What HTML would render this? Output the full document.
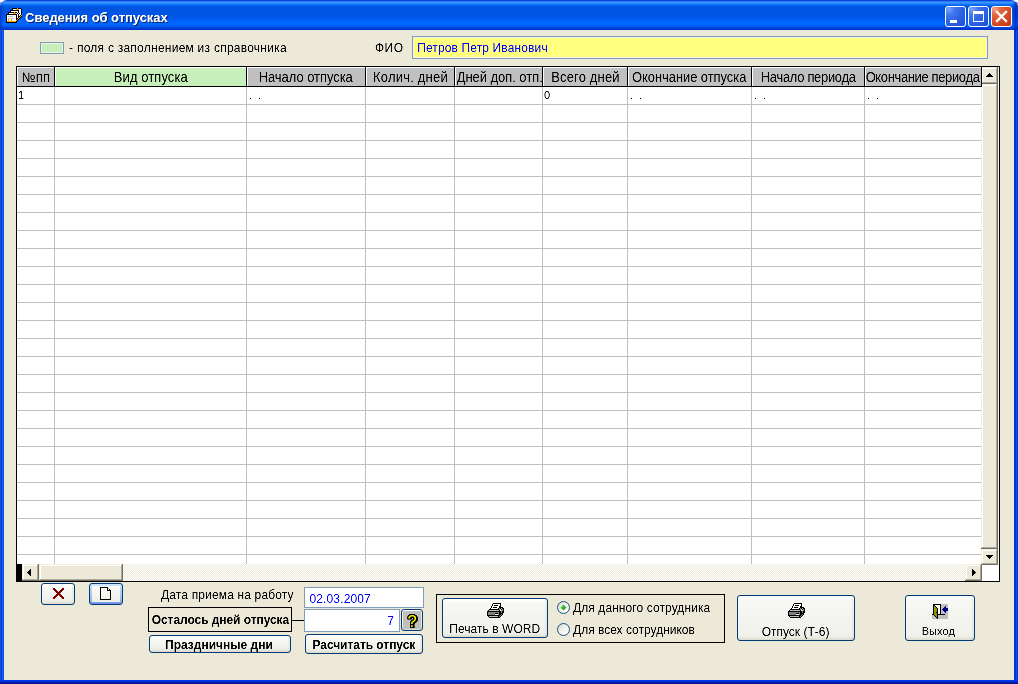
<!DOCTYPE html><html lang="ru"><head><meta charset="utf-8"><title>Сведения об отпусках</title><style>
*{box-sizing:border-box;margin:0;padding:0}
html,body{width:1018px;height:684px;overflow:hidden;background:#ECE9D8}
body{position:relative;font-family:"Liberation Sans",sans-serif;font-size:12px;color:#000;line-height:1}
.abs{position:absolute}
#win{position:absolute;left:0;top:0;width:1018px;height:684px;background:#0855DD;overflow:hidden}
#bl{position:absolute;left:0;top:8px;width:4px;height:676px;background:linear-gradient(to right,#0A5ADB 0 1px,#0831D9 1px 2px,#166AEE 2px 3px,#0855DD 3px 4px)}
#br{position:absolute;left:1014px;top:8px;width:4px;height:676px;background:linear-gradient(to right,#0038F0 0 1px,#0030D2 1px 2px,#0A50F0 2px 3px,#0035D8 3px 4px)}
#bb{position:absolute;left:0;top:680px;width:1018px;height:4px;background:linear-gradient(to bottom,#0038F0 0 1px,#002AD5 1px 2px,#001DA5 2px 3px,#00138C 3px 4px)}
#client{position:absolute;left:4px;top:30px;width:1010px;height:650px;background:#ECE9D8}
#tb{position:absolute;left:0;top:0;width:1018px;height:30px;border-radius:7px 7px 0 0;
 background:linear-gradient(to bottom,#0A44D8 0px,#0A44D8 1px,#2A7AF4 1.5px,#3E95FF 2.5px,#2A88FF 3.5px,#0F74F8 4.5px,#0463EC 5.5px,#0057E2 7px,#0054E0 9px,#0055E6 16px,#005AF0 19px,#0066FF 22px,#0066FF 25px,#0060F2 26px,#0052E0 27px,#0040D4 28px,#0030CC 30px)}
#tb:before{content:'';position:absolute;left:0;top:2px;width:4px;height:28px;background:linear-gradient(to right,rgba(0,30,170,0.55),rgba(0,30,170,0.2) 50%,rgba(0,30,170,0))}
#tb:after{content:'';position:absolute;right:0;top:2px;width:6px;height:28px;background:linear-gradient(to left,rgba(0,25,160,0.3),rgba(0,25,170,0.6) 40%,rgba(0,30,170,0))}
#corner{position:absolute;left:0;top:0;width:1018px;height:10px;background:#fff}
#title{color:#fff;font-weight:bold;font-size:13px;white-space:nowrap;text-shadow:1px 1px 0 #0a246a}
.cb{position:absolute;top:6px;width:21px;height:21px;border:1px solid #fff;border-radius:3px;
 background:radial-gradient(circle at 15% 12%,#7AA4FA 0%,#4077EE 25%,#2B60E6 60%,#1E4CD0 100%)}
.cb.x{background:radial-gradient(circle at 15% 12%,#F0A58C 0%,#E36A44 22%,#DA4E27 55%,#C53610 100%)}
.t{position:absolute;white-space:nowrap;filter:url(#crisp)}
.hc span{filter:url(#crisp);display:inline-block}
.fld{position:absolute;border:1px solid #7F9DB9;background:#fff}
.btn{position:absolute;border:1px solid #003C74;border-radius:3px;
 background:linear-gradient(to right,rgba(0,0,0,0) calc(100% - 3px),rgba(120,110,80,0.10) 100%),linear-gradient(to bottom,#fff 0,#fff 1px,#F8F8F5 4px,#F4F4F0 45%,#F1F1EC calc(100% - 4px),#E8E6DE calc(100% - 2px),#DCD8CE 100%)}
.btn.def{padding:2px;background:linear-gradient(to bottom,#fff 0,#F8F8F5 3px,#F4F4F0 45%,#F0F0EA 100%) content-box,linear-gradient(to bottom,#CEE7FF 0%,#BCD4F6 25%,#A4C0EC 70%,#89ADE4 88%,#6982EE 100%) padding-box}
.q{position:absolute;left:2px;top:0.5px;width:16px;height:20px;font-size:16.5px;line-height:20px;text-align:center;color:#FFFF00;filter:url(#crisp);text-shadow:1px 0 #000,-1px 0 #000,0 1px #000,0 -1px #000,1px 1px #000,-1px 1px #000,1px -1px #000,-1px -1px #000,2px 0 #000,2px 1px #000}
#grid{position:absolute;left:16px;top:66px;width:984px;height:516px;background:#000}
#ginner{position:absolute;left:1px;top:1px;width:982px;height:514px;background:#fff;overflow:hidden}
.hc{position:absolute;top:0;height:19px;background:#C0C0C0;border-top:1px solid #fff;border-left:1px solid #fff;font-size:13px;text-align:center;white-space:nowrap;overflow:hidden}
.hc.g{background:#C6EFB9}
.hs{position:absolute;top:0;width:1px;height:20px;background:#000}
.vl{position:absolute;top:20px;width:1px;height:478px;background:#C0C0C0}
.hl{position:absolute;left:0;width:964px;height:1px;background:#C0C0C0}
.sb{position:absolute;background:#ECE9D8;box-shadow:inset -1px -1px 0 #716F64,inset 1px 1px 0 #F1EFE2,inset -2px -2px 0 #ACA899,inset 2px 2px 0 #fff}
.trk{position:absolute;background:conic-gradient(#fff 25%,#ECE9D8 0 50%,#fff 0 75%,#ECE9D8 0) 0 0/2px 2px}
.frame{position:absolute;border:1px solid #000}
</style></head><body>
<svg width="0" height="0" style="position:absolute"><defs><filter id="crisp" x="-5%" y="-25%" width="110%" height="150%" color-interpolation-filters="sRGB"><feComponentTransfer><feFuncA type="table" tableValues="0 0.05 0.5 0.95 1"/></feComponentTransfer></filter></defs></svg>
<div id="win">
<div id="corner"></div><div id="bl"></div><div id="br"></div><div id="bb"></div><div id="tb"></div>
<svg class="abs" style="left:6px;top:8px;" width="16" height="15" viewBox="0 0 16 15" shape-rendering="crispEdges"><rect x="6" y="0" width="5" height="1" fill="#000"/><rect x="11" y="0" width="1" height="1" fill="#FF9A00"/><rect x="12" y="0" width="3" height="1" fill="#000"/><rect x="6" y="1" width="1" height="1" fill="#000"/><rect x="7" y="1" width="3" height="1" fill="#fff"/><rect x="10" y="1" width="3" height="1" fill="#FF9A00"/><rect x="13" y="1" width="2" height="1" fill="#fff"/><rect x="15" y="1" width="1" height="1" fill="#000"/><rect x="4" y="2" width="9" height="1" fill="#000"/><rect x="13" y="2" width="2" height="1" fill="#fff"/><rect x="15" y="2" width="1" height="1" fill="#000"/><rect x="4" y="3" width="1" height="1" fill="#000"/><rect x="5" y="3" width="7" height="1" fill="#fff"/><rect x="12" y="3" width="1" height="1" fill="#000"/><rect x="13" y="3" width="2" height="1" fill="#fff"/><rect x="15" y="3" width="1" height="1" fill="#000"/><rect x="2" y="4" width="6" height="1" fill="#000"/><rect x="8" y="4" width="1" height="1" fill="#FF9A00"/><rect x="9" y="4" width="2" height="1" fill="#000"/><rect x="11" y="4" width="1" height="1" fill="#fff"/><rect x="12" y="4" width="1" height="1" fill="#000"/><rect x="13" y="4" width="2" height="1" fill="#fff"/><rect x="15" y="4" width="1" height="1" fill="#000"/><rect x="2" y="5" width="1" height="1" fill="#000"/><rect x="3" y="5" width="4" height="1" fill="#fff"/><rect x="7" y="5" width="3" height="1" fill="#FF9A00"/><rect x="10" y="5" width="1" height="1" fill="#fff"/><rect x="11" y="5" width="1" height="1" fill="#000"/><rect x="12" y="5" width="1" height="1" fill="#fff"/><rect x="13" y="5" width="1" height="1" fill="#000"/><rect x="14" y="5" width="1" height="1" fill="#fff"/><rect x="15" y="5" width="1" height="1" fill="#000"/><rect x="0" y="6" width="11" height="1" fill="#000"/><rect x="11" y="6" width="1" height="1" fill="#fff"/><rect x="12" y="6" width="1" height="1" fill="#000"/><rect x="13" y="6" width="2" height="1" fill="#fff"/><rect x="15" y="6" width="1" height="1" fill="#000"/><rect x="0" y="7" width="1" height="1" fill="#000"/><rect x="1" y="7" width="9" height="1" fill="#fff"/><rect x="10" y="7" width="1" height="1" fill="#000"/><rect x="11" y="7" width="1" height="1" fill="#fff"/><rect x="12" y="7" width="1" height="1" fill="#000"/><rect x="13" y="7" width="1" height="1" fill="#fff"/><rect x="14" y="7" width="1" height="1" fill="#000"/><rect x="15" y="7" width="1" height="1" fill="#FF9A00"/><rect x="0" y="8" width="1" height="1" fill="#000"/><rect x="1" y="8" width="1" height="1" fill="#fff"/><rect x="2" y="8" width="5" height="1" fill="#C0C0C0"/><rect x="7" y="8" width="3" height="1" fill="#fff"/><rect x="10" y="8" width="1" height="1" fill="#000"/><rect x="11" y="8" width="1" height="1" fill="#fff"/><rect x="12" y="8" width="2" height="1" fill="#000"/><rect x="14" y="8" width="1" height="1" fill="#FF9A00"/><rect x="15" y="8" width="1" height="1" fill="#000"/><rect x="0" y="9" width="1" height="1" fill="#000"/><rect x="1" y="9" width="9" height="1" fill="#fff"/><rect x="10" y="9" width="1" height="1" fill="#000"/><rect x="11" y="9" width="1" height="1" fill="#fff"/><rect x="12" y="9" width="1" height="1" fill="#000"/><rect x="13" y="9" width="1" height="1" fill="#FF9A00"/><rect x="14" y="9" width="1" height="1" fill="#000"/><rect x="0" y="10" width="1" height="1" fill="#000"/><rect x="1" y="10" width="1" height="1" fill="#fff"/><rect x="2" y="10" width="6" height="1" fill="#C0C0C0"/><rect x="8" y="10" width="2" height="1" fill="#fff"/><rect x="10" y="10" width="2" height="1" fill="#000"/><rect x="12" y="10" width="1" height="1" fill="#FF9A00"/><rect x="13" y="10" width="1" height="1" fill="#000"/><rect x="0" y="11" width="1" height="1" fill="#000"/><rect x="1" y="11" width="1" height="1" fill="#fff"/><rect x="2" y="11" width="1" height="1" fill="#FF9A00"/><rect x="3" y="11" width="2" height="1" fill="#fff"/><rect x="5" y="11" width="1" height="1" fill="#FF9A00"/><rect x="6" y="11" width="4" height="1" fill="#fff"/><rect x="10" y="11" width="1" height="1" fill="#000"/><rect x="11" y="11" width="1" height="1" fill="#FF9A00"/><rect x="12" y="11" width="1" height="1" fill="#000"/><rect x="0" y="12" width="1" height="1" fill="#000"/><rect x="1" y="12" width="1" height="1" fill="#fff"/><rect x="2" y="12" width="1" height="1" fill="#FF9A00"/><rect x="3" y="12" width="2" height="1" fill="#fff"/><rect x="5" y="12" width="1" height="1" fill="#FF9A00"/><rect x="6" y="12" width="4" height="1" fill="#fff"/><rect x="10" y="12" width="1" height="1" fill="#FF9A00"/><rect x="11" y="12" width="1" height="1" fill="#000"/><rect x="0" y="13" width="1" height="1" fill="#000"/><rect x="1" y="13" width="9" height="1" fill="#FF9A00"/><rect x="10" y="13" width="1" height="1" fill="#000"/><rect x="0" y="14" width="11" height="1" fill="#000"/></svg>
<div class="t" id="title" style="left:25.10px;top:11.00px;letter-spacing:-0.047px;">Сведения об отпусках</div>
<div class="cb" style="left:945px"><div class="abs" style="left:4px;top:13px;width:7px;height:3px;background:#fff"></div></div>
<div class="cb" style="left:968px"><div class="abs" style="left:4px;top:4px;width:11px;height:11px;border:1px solid #fff;border-top-width:3px"></div></div>
<div class="cb x" style="left:991px"><svg class="abs" style="left:0;top:0" width="19" height="19" viewBox="0 0 19 19"><path d="M5 5 L14 14 M14 5 L5 14" stroke="#fff" stroke-width="2.3" stroke-linecap="square"/></svg></div>
<div id="client"></div>
<div class="abs" style="left:40px;top:42px;width:24px;height:12px;background:#C6EFB9;border:1px solid #7F9DB9;box-shadow:inset 0 0 0 1px #F1EFE3"></div>
<div class="t" id="t_leg" style="left:69.10px;top:42.00px;letter-spacing:0.245px;">- поля с заполнением из справочника</div>
<div class="t" id="t_fio" style="left:374.92px;top:42.00px;letter-spacing:0.540px;">ФИО</div>
<div class="fld" style="left:412px;top:36px;width:576px;height:23px;background:#FFFF80;box-shadow:inset 0 0 0 1px #F6F4E6"></div>
<div class="t" id="t_name" style="left:417.18px;top:42.00px;letter-spacing:0.129px;color:#0000FF">Петров Петр Иванович</div>
<div id="grid"><div id="ginner">
<div class="hc" style="left:0px;width:37px"></div>
<div class="t" id="h0" style="left:4.82px;top:3.00px;letter-spacing:0.090px;font-size:13px;transform:scaleY(1.07);transform-origin:0 2px">№пп</div>
<div class="hs" style="left:37px"></div>
<div class="vl" style="left:37px"></div>
<div class="hc g" style="left:38px;width:191px"></div>
<div class="t" id="h1" style="left:96.82px;top:3.00px;letter-spacing:0.072px;font-size:13px;transform:scaleY(1.07);transform-origin:0 2px">Вид отпуска</div>
<div class="hs" style="left:229px"></div>
<div class="vl" style="left:229px"></div>
<div class="hc" style="left:230px;width:118px"></div>
<div class="t" id="h2" style="left:241.64px;top:3.00px;letter-spacing:-0.056px;font-size:13px;transform:scaleY(1.07);transform-origin:0 2px">Начало отпуска</div>
<div class="hs" style="left:348px"></div>
<div class="vl" style="left:348px"></div>
<div class="hc" style="left:349px;width:88px"></div>
<div class="t" id="h3" style="left:356.10px;top:3.00px;letter-spacing:0.198px;font-size:13px;transform:scaleY(1.07);transform-origin:0 2px">Колич. дней</div>
<div class="hs" style="left:437px"></div>
<div class="vl" style="left:437px"></div>
<div class="hc" style="left:438px;width:87px"></div>
<div class="t" id="h4" style="left:439.72px;top:3.00px;letter-spacing:-0.053px;font-size:13px;transform:scaleY(1.07);transform-origin:0 2px">Дней доп. отп.</div>
<div class="hs" style="left:525px"></div>
<div class="vl" style="left:525px"></div>
<div class="hc" style="left:526px;width:84px"></div>
<div class="t" id="h5" style="left:534.18px;top:3.00px;letter-spacing:0.160px;font-size:13px;transform:scaleY(1.07);transform-origin:0 2px">Всего дней</div>
<div class="hs" style="left:610px"></div>
<div class="vl" style="left:610px"></div>
<div class="hc" style="left:611px;width:123px"></div>
<div class="t" id="h6" style="left:615.00px;top:3.00px;letter-spacing:-0.080px;font-size:13px;transform:scaleY(1.07);transform-origin:0 2px">Окончание отпуска</div>
<div class="hs" style="left:734px"></div>
<div class="vl" style="left:734px"></div>
<div class="hc" style="left:735px;width:112px"></div>
<div class="t" id="h7" style="left:743.82px;top:3.00px;letter-spacing:-0.333px;font-size:13px;transform:scaleY(1.07);transform-origin:0 2px">Начало периода</div>
<div class="hs" style="left:847px"></div>
<div class="vl" style="left:847px"></div>
<div class="hc" style="left:848px;width:116px"></div>
<div class="t" id="h8" style="left:848.64px;top:3.00px;letter-spacing:-0.370px;font-size:13px;transform:scaleY(1.07);transform-origin:0 2px">Окончание периода</div>
<div class="hs" style="left:964px"></div>
<div class="abs" style="left:0;top:19px;width:965px;height:1px;background:#000"></div>
<div class="hl" style="top:37px"></div>
<div class="hl" style="top:55px"></div>
<div class="hl" style="top:73px"></div>
<div class="hl" style="top:91px"></div>
<div class="hl" style="top:109px"></div>
<div class="hl" style="top:127px"></div>
<div class="hl" style="top:145px"></div>
<div class="hl" style="top:163px"></div>
<div class="hl" style="top:181px"></div>
<div class="hl" style="top:199px"></div>
<div class="hl" style="top:217px"></div>
<div class="hl" style="top:235px"></div>
<div class="hl" style="top:253px"></div>
<div class="hl" style="top:271px"></div>
<div class="hl" style="top:289px"></div>
<div class="hl" style="top:307px"></div>
<div class="hl" style="top:325px"></div>
<div class="hl" style="top:343px"></div>
<div class="hl" style="top:361px"></div>
<div class="hl" style="top:379px"></div>
<div class="hl" style="top:397px"></div>
<div class="hl" style="top:415px"></div>
<div class="hl" style="top:433px"></div>
<div class="hl" style="top:451px"></div>
<div class="hl" style="top:469px"></div>
<div class="hl" style="top:487px"></div>
<div class="t" style="left:1px;top:23px;font-size:11px">1</div>
<div class="t" style="left:527px;top:23px;font-size:11px">0</div>
<div class="t" style="left:232px;top:23px;font-size:11px;letter-spacing:6px">..</div>
<div class="t" style="left:613px;top:23px;font-size:11px;letter-spacing:6px">..</div>
<div class="t" style="left:737px;top:23px;font-size:11px;letter-spacing:6px">..</div>
<div class="t" style="left:850px;top:23px;font-size:11px;letter-spacing:6px">..</div>
<div class="trk" style="left:964px;top:0;width:18px;height:498px"></div>
<div class="abs" style="left:964px;top:0;width:1px;height:20px;background:#000;z-index:3"></div>
<div class="abs" style="left:981px;top:0;width:1px;height:514px;background:#F8F6EE"></div>
<div class="sb" style="left:964px;top:0;width:17px;height:17px"></div>
<div class="sb" style="left:964px;top:17px;width:17px;height:465px"></div>
<div class="sb" style="left:964px;top:482px;width:17px;height:16px"></div>
<div class="abs" style="left:972px;top:6px;width:1px;height:1px;background:#000"></div><div class="abs" style="left:971px;top:7px;width:3px;height:1px;background:#000"></div><div class="abs" style="left:970px;top:8px;width:5px;height:1px;background:#000"></div><div class="abs" style="left:969px;top:9px;width:7px;height:1px;background:#000"></div>
<div class="abs" style="left:969px;top:488px;width:7px;height:1px;background:#000"></div><div class="abs" style="left:970px;top:489px;width:5px;height:1px;background:#000"></div><div class="abs" style="left:971px;top:490px;width:3px;height:1px;background:#000"></div><div class="abs" style="left:972px;top:491px;width:1px;height:1px;background:#000"></div>
<div class="trk" style="left:0;top:497px;width:965px;height:17px"></div>
<div class="abs" style="left:0;top:497px;width:5px;height:17px;background:#000"></div>
<div class="sb" style="left:5px;top:497px;width:17px;height:17px"></div>
<div class="sb" style="left:22px;top:497px;width:84px;height:17px"></div>
<div class="sb" style="left:948px;top:497px;width:17px;height:17px"></div>
<div class="abs" style="left:965px;top:498px;width:17px;height:16px;background:#fff"></div>
<div class="abs" style="left:10px;top:505px;width:1px;height:1px;background:#000"></div><div class="abs" style="left:11px;top:504px;width:1px;height:3px;background:#000"></div><div class="abs" style="left:12px;top:503px;width:1px;height:5px;background:#000"></div><div class="abs" style="left:13px;top:502px;width:1px;height:7px;background:#000"></div>
<div class="abs" style="left:955px;top:502px;width:1px;height:7px;background:#000"></div><div class="abs" style="left:956px;top:503px;width:1px;height:5px;background:#000"></div><div class="abs" style="left:957px;top:504px;width:1px;height:3px;background:#000"></div><div class="abs" style="left:958px;top:505px;width:1px;height:1px;background:#000"></div>
</div></div>
<div class="btn" style="left:41px;top:583px;width:34px;height:22px"></div>
<svg class="abs" style="left:53px;top:588px;" width="11" height="11" viewBox="0 0 11 11" shape-rendering="crispEdges"><rect x="0" y="0" width="2" height="1" fill="#800000"/><rect x="9" y="0" width="2" height="1" fill="#800000"/><rect x="0" y="1" width="3" height="1" fill="#800000"/><rect x="8" y="1" width="3" height="1" fill="#800000"/><rect x="1" y="2" width="3" height="1" fill="#800000"/><rect x="7" y="2" width="3" height="1" fill="#800000"/><rect x="2" y="3" width="3" height="1" fill="#800000"/><rect x="6" y="3" width="3" height="1" fill="#800000"/><rect x="3" y="4" width="5" height="1" fill="#800000"/><rect x="4" y="5" width="3" height="1" fill="#800000"/><rect x="3" y="6" width="5" height="1" fill="#800000"/><rect x="2" y="7" width="3" height="1" fill="#800000"/><rect x="6" y="7" width="3" height="1" fill="#800000"/><rect x="1" y="8" width="3" height="1" fill="#800000"/><rect x="7" y="8" width="3" height="1" fill="#800000"/><rect x="0" y="9" width="3" height="1" fill="#800000"/><rect x="8" y="9" width="3" height="1" fill="#800000"/><rect x="0" y="10" width="2" height="1" fill="#800000"/><rect x="9" y="10" width="2" height="1" fill="#800000"/></svg>
<div class="btn def" style="left:89px;top:583px;width:34px;height:22px"></div>
<svg class="abs" style="left:100px;top:587px;" width="11" height="13" viewBox="0 0 11 13" shape-rendering="crispEdges"><rect x="0" y="0" width="8" height="1" fill="#000"/><rect x="0" y="1" width="1" height="1" fill="#000"/><rect x="1" y="1" width="6" height="1" fill="#fff"/><rect x="7" y="1" width="1" height="1" fill="#000"/><rect x="8" y="1" width="1" height="1" fill="#C0C0C0"/><rect x="0" y="2" width="1" height="1" fill="#000"/><rect x="1" y="2" width="1" height="1" fill="#fff"/><rect x="7" y="2" width="1" height="1" fill="#000"/><rect x="8" y="2" width="1" height="1" fill="#fff"/><rect x="9" y="2" width="1" height="1" fill="#000"/><rect x="0" y="3" width="1" height="1" fill="#000"/><rect x="1" y="3" width="1" height="1" fill="#fff"/><rect x="7" y="3" width="4" height="1" fill="#000"/><rect x="0" y="4" width="1" height="1" fill="#000"/><rect x="1" y="4" width="1" height="1" fill="#fff"/><rect x="10" y="4" width="1" height="1" fill="#000"/><rect x="0" y="5" width="1" height="1" fill="#000"/><rect x="1" y="5" width="1" height="1" fill="#fff"/><rect x="10" y="5" width="1" height="1" fill="#000"/><rect x="0" y="6" width="1" height="1" fill="#000"/><rect x="1" y="6" width="1" height="1" fill="#fff"/><rect x="10" y="6" width="1" height="1" fill="#000"/><rect x="0" y="7" width="1" height="1" fill="#000"/><rect x="1" y="7" width="1" height="1" fill="#fff"/><rect x="10" y="7" width="1" height="1" fill="#000"/><rect x="0" y="8" width="1" height="1" fill="#000"/><rect x="1" y="8" width="1" height="1" fill="#fff"/><rect x="10" y="8" width="1" height="1" fill="#000"/><rect x="0" y="9" width="1" height="1" fill="#000"/><rect x="1" y="9" width="1" height="1" fill="#fff"/><rect x="10" y="9" width="1" height="1" fill="#000"/><rect x="0" y="10" width="1" height="1" fill="#000"/><rect x="1" y="10" width="1" height="1" fill="#fff"/><rect x="10" y="10" width="1" height="1" fill="#000"/><rect x="0" y="11" width="1" height="1" fill="#000"/><rect x="1" y="11" width="1" height="1" fill="#fff"/><rect x="10" y="11" width="1" height="1" fill="#000"/><rect x="0" y="12" width="11" height="1" fill="#000"/></svg>
<div class="t" id="t_date" style="left:161.00px;top:589.00px;letter-spacing:0.149px;">Дата приема на работу</div>
<div class="frame" style="left:148px;top:607px;width:144px;height:25px"></div>
<div class="t" id="t_ost" style="left:151.73px;top:614.00px;letter-spacing:-0.063px;font-weight:bold">Осталось дней отпуска</div>
<div class="abs" style="left:292px;top:620px;width:12px;height:1px;background:#000"></div>
<div class="btn" style="left:149px;top:635px;width:142px;height:18px"></div>
<div class="t" id="t_pr" style="left:165.10px;top:639.00px;letter-spacing:0.000px;font-weight:bold">Праздничные дни</div>
<div class="fld" style="left:304px;top:587px;width:120px;height:21px"></div>
<div class="t" id="t_d" style="left:309.46px;top:593.00px;letter-spacing:0.140px;color:#0000FF">02.03.2007</div>
<div class="fld" style="left:304px;top:609px;width:96px;height:23px"></div>
<div class="t" id="t_7" style="left:387.18px;top:615.00px;letter-spacing:0.000px;color:#0000FF">7</div>
<div class="btn" style="left:401px;top:609px;width:22px;height:22px"><div class="abs" style="left:1px;top:1px;width:18px;height:18px;background:#C0C0C0"></div><div class="q">?</div></div>
<div class="btn" style="left:305px;top:634px;width:118px;height:20px"></div>
<div class="t" id="t_ras" style="left:312.46px;top:639.00px;letter-spacing:-0.048px;font-weight:bold">Расчитать отпуск</div>
<div class="frame" style="left:436px;top:594px;width:289px;height:49px"></div>
<div class="btn" style="left:442px;top:598px;width:106px;height:40px"></div>
<svg class="abs" style="left:487px;top:603px;" width="17" height="15" viewBox="0 0 17 15" shape-rendering="crispEdges"><rect x="6" y="0" width="8" height="1" fill="#000"/><rect x="5" y="1" width="1" height="1" fill="#000"/><rect x="6" y="1" width="7" height="1" fill="#fff"/><rect x="13" y="1" width="1" height="1" fill="#000"/><rect x="5" y="2" width="1" height="1" fill="#000"/><rect x="6" y="2" width="1" height="1" fill="#fff"/><rect x="7" y="2" width="4" height="1" fill="#000"/><rect x="11" y="2" width="2" height="1" fill="#fff"/><rect x="13" y="2" width="1" height="1" fill="#000"/><rect x="4" y="3" width="1" height="1" fill="#000"/><rect x="5" y="3" width="7" height="1" fill="#fff"/><rect x="12" y="3" width="2" height="1" fill="#000"/><rect x="4" y="4" width="1" height="1" fill="#000"/><rect x="5" y="4" width="1" height="1" fill="#fff"/><rect x="6" y="4" width="4" height="1" fill="#000"/><rect x="10" y="4" width="2" height="1" fill="#fff"/><rect x="12" y="4" width="4" height="1" fill="#000"/><rect x="3" y="5" width="1" height="1" fill="#000"/><rect x="4" y="5" width="7" height="1" fill="#fff"/><rect x="11" y="5" width="1" height="1" fill="#000"/><rect x="12" y="5" width="1" height="1" fill="#808080"/><rect x="13" y="5" width="1" height="1" fill="#000"/><rect x="14" y="5" width="1" height="1" fill="#C0C0C0"/><rect x="15" y="5" width="2" height="1" fill="#000"/><rect x="2" y="6" width="10" height="1" fill="#000"/><rect x="12" y="6" width="1" height="1" fill="#808080"/><rect x="13" y="6" width="1" height="1" fill="#C0C0C0"/><rect x="14" y="6" width="1" height="1" fill="#000"/><rect x="15" y="6" width="1" height="1" fill="#C0C0C0"/><rect x="16" y="6" width="1" height="1" fill="#000"/><rect x="1" y="7" width="1" height="1" fill="#000"/><rect x="2" y="7" width="10" height="1" fill="#C0C0C0"/><rect x="12" y="7" width="1" height="1" fill="#000"/><rect x="13" y="7" width="1" height="1" fill="#fff"/><rect x="14" y="7" width="1" height="1" fill="#C0C0C0"/><rect x="15" y="7" width="1" height="1" fill="#808080"/><rect x="16" y="7" width="1" height="1" fill="#000"/><rect x="0" y="8" width="14" height="1" fill="#000"/><rect x="14" y="8" width="1" height="1" fill="#808080"/><rect x="15" y="8" width="2" height="1" fill="#000"/><rect x="0" y="9" width="1" height="1" fill="#000"/><rect x="1" y="9" width="11" height="1" fill="#808080"/><rect x="12" y="9" width="2" height="1" fill="#000"/><rect x="14" y="9" width="1" height="1" fill="#808080"/><rect x="15" y="9" width="2" height="1" fill="#000"/><rect x="0" y="10" width="1" height="1" fill="#000"/><rect x="1" y="10" width="7" height="1" fill="#808080"/><rect x="8" y="10" width="3" height="1" fill="#000"/><rect x="11" y="10" width="1" height="1" fill="#808080"/><rect x="12" y="10" width="4" height="1" fill="#000"/><rect x="0" y="11" width="1" height="1" fill="#000"/><rect x="1" y="11" width="7" height="1" fill="#808080"/><rect x="8" y="11" width="3" height="1" fill="#fff"/><rect x="11" y="11" width="1" height="1" fill="#808080"/><rect x="12" y="11" width="2" height="1" fill="#000"/><rect x="14" y="11" width="1" height="1" fill="#808080"/><rect x="15" y="11" width="1" height="1" fill="#000"/><rect x="0" y="12" width="13" height="1" fill="#000"/><rect x="13" y="12" width="1" height="1" fill="#808080"/><rect x="14" y="12" width="1" height="1" fill="#000"/><rect x="1" y="13" width="1" height="1" fill="#000"/><rect x="2" y="13" width="9" height="1" fill="#C0C0C0"/><rect x="11" y="13" width="1" height="1" fill="#000"/><rect x="12" y="13" width="1" height="1" fill="#808080"/><rect x="13" y="13" width="1" height="1" fill="#000"/><rect x="2" y="14" width="11" height="1" fill="#000"/></svg>
<div class="t" id="t_pw" style="left:449.26px;top:623.00px;letter-spacing:0.055px;">Печать в WORD</div>
<div class="t" id="t_r1" style="left:573.00px;top:602.00px;letter-spacing:0.086px;">Для данного сотрудника</div>
<div class="t" id="t_r2" style="left:573.00px;top:624.00px;letter-spacing:0.000px;">Для всех сотрудников</div>
<svg width="0" height="0" style="position:absolute"><defs><linearGradient id="rg" x1="0" y1="0" x2="1" y2="1"><stop offset="0" stop-color="#D4D4CE"/><stop offset="0.5" stop-color="#F2F2EE"/><stop offset="1" stop-color="#fff"/></linearGradient><linearGradient id="gg" x1="0" y1="0" x2="1" y2="1"><stop offset="0" stop-color="#7AE875"/><stop offset="0.5" stop-color="#30B82C"/><stop offset="1" stop-color="#1C961A"/></linearGradient></defs></svg>
<svg class="abs" style="left:557px;top:601px" width="13" height="13" viewBox="0 0 13 13"><circle cx="6.5" cy="6.5" r="6" fill="url(#rg)" stroke="#1C4F86" stroke-width="1"/><path d="M6.5 3.6 L9.4 6.5 L6.5 9.4 L3.6 6.5 Z" fill="url(#gg)"/></svg>
<svg class="abs" style="left:557px;top:623px" width="13" height="13" viewBox="0 0 13 13"><circle cx="6.5" cy="6.5" r="6" fill="url(#rg)" stroke="#1C4F86" stroke-width="1"/></svg>
<div class="btn" style="left:737px;top:595px;width:118px;height:46px"></div>
<svg class="abs" style="left:788px;top:603px;" width="17" height="15" viewBox="0 0 17 15" shape-rendering="crispEdges"><rect x="6" y="0" width="8" height="1" fill="#000"/><rect x="5" y="1" width="1" height="1" fill="#000"/><rect x="6" y="1" width="7" height="1" fill="#fff"/><rect x="13" y="1" width="1" height="1" fill="#000"/><rect x="5" y="2" width="1" height="1" fill="#000"/><rect x="6" y="2" width="1" height="1" fill="#fff"/><rect x="7" y="2" width="4" height="1" fill="#000"/><rect x="11" y="2" width="2" height="1" fill="#fff"/><rect x="13" y="2" width="1" height="1" fill="#000"/><rect x="4" y="3" width="1" height="1" fill="#000"/><rect x="5" y="3" width="7" height="1" fill="#fff"/><rect x="12" y="3" width="2" height="1" fill="#000"/><rect x="4" y="4" width="1" height="1" fill="#000"/><rect x="5" y="4" width="1" height="1" fill="#fff"/><rect x="6" y="4" width="4" height="1" fill="#000"/><rect x="10" y="4" width="2" height="1" fill="#fff"/><rect x="12" y="4" width="4" height="1" fill="#000"/><rect x="3" y="5" width="1" height="1" fill="#000"/><rect x="4" y="5" width="7" height="1" fill="#fff"/><rect x="11" y="5" width="1" height="1" fill="#000"/><rect x="12" y="5" width="1" height="1" fill="#808080"/><rect x="13" y="5" width="1" height="1" fill="#000"/><rect x="14" y="5" width="1" height="1" fill="#C0C0C0"/><rect x="15" y="5" width="2" height="1" fill="#000"/><rect x="2" y="6" width="10" height="1" fill="#000"/><rect x="12" y="6" width="1" height="1" fill="#808080"/><rect x="13" y="6" width="1" height="1" fill="#C0C0C0"/><rect x="14" y="6" width="1" height="1" fill="#000"/><rect x="15" y="6" width="1" height="1" fill="#C0C0C0"/><rect x="16" y="6" width="1" height="1" fill="#000"/><rect x="1" y="7" width="1" height="1" fill="#000"/><rect x="2" y="7" width="10" height="1" fill="#C0C0C0"/><rect x="12" y="7" width="1" height="1" fill="#000"/><rect x="13" y="7" width="1" height="1" fill="#fff"/><rect x="14" y="7" width="1" height="1" fill="#C0C0C0"/><rect x="15" y="7" width="1" height="1" fill="#808080"/><rect x="16" y="7" width="1" height="1" fill="#000"/><rect x="0" y="8" width="14" height="1" fill="#000"/><rect x="14" y="8" width="1" height="1" fill="#808080"/><rect x="15" y="8" width="2" height="1" fill="#000"/><rect x="0" y="9" width="1" height="1" fill="#000"/><rect x="1" y="9" width="11" height="1" fill="#808080"/><rect x="12" y="9" width="2" height="1" fill="#000"/><rect x="14" y="9" width="1" height="1" fill="#808080"/><rect x="15" y="9" width="2" height="1" fill="#000"/><rect x="0" y="10" width="1" height="1" fill="#000"/><rect x="1" y="10" width="7" height="1" fill="#808080"/><rect x="8" y="10" width="3" height="1" fill="#000"/><rect x="11" y="10" width="1" height="1" fill="#808080"/><rect x="12" y="10" width="4" height="1" fill="#000"/><rect x="0" y="11" width="1" height="1" fill="#000"/><rect x="1" y="11" width="7" height="1" fill="#808080"/><rect x="8" y="11" width="3" height="1" fill="#fff"/><rect x="11" y="11" width="1" height="1" fill="#808080"/><rect x="12" y="11" width="2" height="1" fill="#000"/><rect x="14" y="11" width="1" height="1" fill="#808080"/><rect x="15" y="11" width="1" height="1" fill="#000"/><rect x="0" y="12" width="13" height="1" fill="#000"/><rect x="13" y="12" width="1" height="1" fill="#808080"/><rect x="14" y="12" width="1" height="1" fill="#000"/><rect x="1" y="13" width="1" height="1" fill="#000"/><rect x="2" y="13" width="9" height="1" fill="#C0C0C0"/><rect x="11" y="13" width="1" height="1" fill="#000"/><rect x="12" y="13" width="1" height="1" fill="#808080"/><rect x="13" y="13" width="1" height="1" fill="#000"/><rect x="2" y="14" width="11" height="1" fill="#000"/></svg>
<div class="t" id="t_ot" style="left:761.64px;top:626.00px;letter-spacing:-0.000px;">Отпуск (Т-6)</div>
<div class="btn" style="left:905px;top:595px;width:70px;height:46px"></div>
<svg class="abs" style="left:932px;top:604px;" width="16" height="15" viewBox="0 0 16 15" shape-rendering="crispEdges"><rect x="1" y="0" width="8" height="1" fill="#000"/><rect x="9" y="0" width="7" height="1" fill="#C0C0C0"/><rect x="1" y="1" width="2" height="1" fill="#000"/><rect x="3" y="1" width="5" height="1" fill="#fff"/><rect x="8" y="1" width="1" height="1" fill="#000"/><rect x="9" y="1" width="7" height="1" fill="#C0C0C0"/><rect x="1" y="2" width="1" height="1" fill="#000"/><rect x="2" y="2" width="1" height="1" fill="#969200"/><rect x="3" y="2" width="1" height="1" fill="#000"/><rect x="4" y="2" width="4" height="1" fill="#fff"/><rect x="8" y="2" width="1" height="1" fill="#000"/><rect x="9" y="2" width="4" height="1" fill="#C0C0C0"/><rect x="13" y="2" width="1" height="1" fill="#000080"/><rect x="14" y="2" width="2" height="1" fill="#C0C0C0"/><rect x="1" y="3" width="1" height="1" fill="#000"/><rect x="2" y="3" width="2" height="1" fill="#969200"/><rect x="4" y="3" width="1" height="1" fill="#000"/><rect x="5" y="3" width="3" height="1" fill="#fff"/><rect x="8" y="3" width="1" height="1" fill="#000"/><rect x="9" y="3" width="3" height="1" fill="#C0C0C0"/><rect x="12" y="3" width="2" height="1" fill="#000080"/><rect x="14" y="3" width="2" height="1" fill="#C0C0C0"/><rect x="1" y="4" width="1" height="1" fill="#000"/><rect x="2" y="4" width="3" height="1" fill="#969200"/><rect x="5" y="4" width="1" height="1" fill="#000"/><rect x="6" y="4" width="2" height="1" fill="#fff"/><rect x="8" y="4" width="1" height="1" fill="#000"/><rect x="9" y="4" width="2" height="1" fill="#C0C0C0"/><rect x="11" y="4" width="5" height="1" fill="#000080"/><rect x="1" y="5" width="1" height="1" fill="#000"/><rect x="2" y="5" width="3" height="1" fill="#969200"/><rect x="5" y="5" width="1" height="1" fill="#000"/><rect x="6" y="5" width="2" height="1" fill="#fff"/><rect x="8" y="5" width="1" height="1" fill="#000"/><rect x="9" y="5" width="1" height="1" fill="#C0C0C0"/><rect x="10" y="5" width="6" height="1" fill="#000080"/><rect x="1" y="6" width="1" height="1" fill="#000"/><rect x="2" y="6" width="3" height="1" fill="#969200"/><rect x="5" y="6" width="1" height="1" fill="#000"/><rect x="6" y="6" width="2" height="1" fill="#fff"/><rect x="8" y="6" width="1" height="1" fill="#000"/><rect x="9" y="6" width="2" height="1" fill="#C0C0C0"/><rect x="11" y="6" width="5" height="1" fill="#000080"/><rect x="1" y="7" width="1" height="1" fill="#000"/><rect x="2" y="7" width="3" height="1" fill="#969200"/><rect x="5" y="7" width="1" height="1" fill="#000"/><rect x="6" y="7" width="2" height="1" fill="#fff"/><rect x="8" y="7" width="1" height="1" fill="#000"/><rect x="9" y="7" width="3" height="1" fill="#C0C0C0"/><rect x="12" y="7" width="2" height="1" fill="#000080"/><rect x="14" y="7" width="2" height="1" fill="#C0C0C0"/><rect x="1" y="8" width="1" height="1" fill="#000"/><rect x="2" y="8" width="2" height="1" fill="#969200"/><rect x="4" y="8" width="2" height="1" fill="#000"/><rect x="6" y="8" width="2" height="1" fill="#fff"/><rect x="8" y="8" width="1" height="1" fill="#000"/><rect x="9" y="8" width="4" height="1" fill="#C0C0C0"/><rect x="13" y="8" width="1" height="1" fill="#000080"/><rect x="14" y="8" width="2" height="1" fill="#C0C0C0"/><rect x="1" y="9" width="1" height="1" fill="#000"/><rect x="2" y="9" width="3" height="1" fill="#969200"/><rect x="5" y="9" width="1" height="1" fill="#000"/><rect x="6" y="9" width="2" height="1" fill="#fff"/><rect x="8" y="9" width="1" height="1" fill="#000"/><rect x="9" y="9" width="7" height="1" fill="#C0C0C0"/><rect x="0" y="10" width="2" height="1" fill="#000"/><rect x="2" y="10" width="3" height="1" fill="#969200"/><rect x="5" y="10" width="8" height="1" fill="#000"/><rect x="13" y="10" width="3" height="1" fill="#C0C0C0"/><rect x="0" y="11" width="2" height="1" fill="#C0C0C0"/><rect x="2" y="11" width="1" height="1" fill="#000"/><rect x="3" y="11" width="2" height="1" fill="#969200"/><rect x="5" y="11" width="1" height="1" fill="#000"/><rect x="6" y="11" width="10" height="1" fill="#C0C0C0"/><rect x="0" y="12" width="3" height="1" fill="#C0C0C0"/><rect x="3" y="12" width="1" height="1" fill="#000"/><rect x="4" y="12" width="1" height="1" fill="#969200"/><rect x="5" y="12" width="1" height="1" fill="#000"/><rect x="6" y="12" width="10" height="1" fill="#C0C0C0"/><rect x="0" y="13" width="4" height="1" fill="#C0C0C0"/><rect x="4" y="13" width="2" height="1" fill="#000"/><rect x="6" y="13" width="10" height="1" fill="#C0C0C0"/><rect x="0" y="14" width="5" height="1" fill="#C0C0C0"/><rect x="5" y="14" width="1" height="1" fill="#000"/><rect x="6" y="14" width="10" height="1" fill="#C0C0C0"/></svg>
<div class="t" id="t_ex" style="left:921.64px;top:626.00px;letter-spacing:0.090px;font-size:11px">Выход</div>
</div></body></html>
